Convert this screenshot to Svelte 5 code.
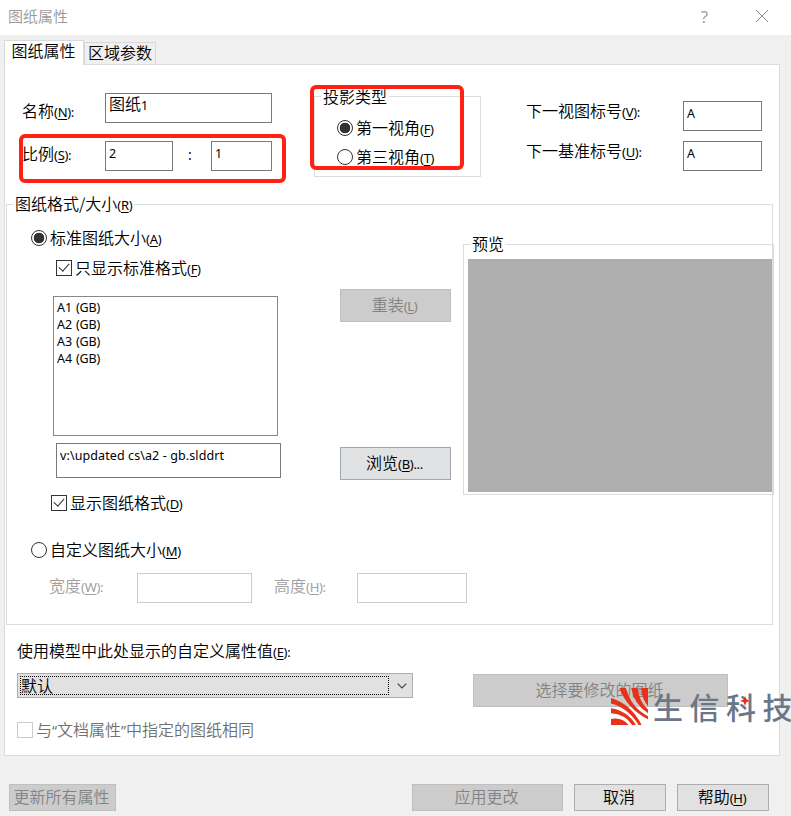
<script>
  let scaleNum = '2'
  let scaleDen = '1'
  let projection = 'first'
  let sizeMode = 'standard'
  let nextView = 'A'
  let nextDatum = 'A'
  let onlyStandard = true
  let showFormat = true
  let path = 'v:\\updated cs\\a2 - gb.slddrt'

  const sheets = ['A1 (GB)', 'A2 (GB)', 'A3 (GB)', 'A4 (GB)']
  const projections = [
    { id: 'first', text: '第一视角', key: 'F' },
    { id: 'third', text: '第三视角', key: 'T' }
  ]
</script>

{#snippet key(k, tail = '')}<span class="key">(<u>{k}</u>){tail}</span>{/snippet}

<div class="dialog">
  <header>
    <span class="title">图纸属性</span>
    <span class="help">?</span>
    <svg class="close" viewBox="0 0 14 14"><path d="M1 1 13 13M13 1 1 13" /></svg>
  </header>

  <nav>
    <button class="tab active">图纸属性</button>
    <button class="tab">区域参数</button>
  </nav>

  <main>
    <section class="top">
      <div class="basics">
        <div class="row">
          <span class="label low">名称{@render key('N', ':')}</span>
          <!-- editable div: the digits are set smaller than the Chinese -->
          <div class="name" contenteditable="true">图纸<span>1</span></div>
        </div>
        <div class="row">
          <span class="label">比例{@render key('S', ':')}</span>
          <input class="num" bind:value={scaleNum} />
          <span class="colon">:</span>
          <input class="den" bind:value={scaleDen} />
        </div>
        <div class="mark mark-scale"></div>
      </div>

      <div class="group projection">
        <div class="legend">投影类型</div>
        {#each projections as p}
          <label class="check">
            <input type="radio" value={p.id} bind:group={projection} />
            <span>{p.text}{@render key(p.key)}</span>
          </label>
        {/each}
        <div class="mark mark-projection"></div>
      </div>

      <div class="next">
        <div class="row">
          <span class="label">下一视图标号{@render key('V', ':')}</span>
          <input bind:value={nextView} />
        </div>
        <div class="row">
          <span class="label">下一基准标号{@render key('U', ':')}</span>
          <input bind:value={nextDatum} />
        </div>
      </div>
    </section>

    <section class="group format">
      <div class="legend">图纸格式/大小{@render key('R')}</div>
      <div class="columns">
        <div class="standard">
          <label class="check">
            <input type="radio" value="standard" bind:group={sizeMode} />
            <span>标准图纸大小{@render key('A')}</span>
          </label>
          <label class="check only">
            <input type="checkbox" bind:checked={onlyStandard} />
            <span>只显示标准格式{@render key('F')}</span>
          </label>
          <ul>
            {#each sheets as sheet}
              <li>{sheet}</li>
            {/each}
          </ul>
          <input class="path" bind:value={path} />
          <label class="check show">
            <input type="checkbox" bind:checked={showFormat} />
            <span>显示图纸格式{@render key('D')}</span>
          </label>
        </div>

        <div class="actions">
          <button class="btn" disabled>重装{@render key('L')}</button>
          <button class="btn browse">浏览{@render key('B', '...')}</button>
        </div>

        <div class="group preview">
          <div class="legend">预览</div>
          <div class="canvas"></div>
        </div>
      </div>

      <label class="check custom">
        <input type="radio" value="custom" bind:group={sizeMode} />
        <span>自定义图纸大小{@render key('M')}</span>
      </label>
      <div class="dims">
        <span class="width-label">宽度{@render key('W', ':')}</span>
        <input class="width" disabled />
        <span class="height-label">高度{@render key('H', ':')}</span>
        <input class="height" disabled />
      </div>
    </section>

    <section class="bottom">
      <div class="model">
        <div class="caption">使用模型中此处显示的自定义属性值{@render key('E', ':')}</div>
        <div class="select">
          <span class="value">默认</span>
          <svg viewBox="0 0 10 6"><path d="M.7.7 5 5 9.3.7" /></svg>
        </div>
        <label class="check same">
          <input type="checkbox" disabled />
          <span>与<span class="quote">“</span>文档属性<span class="quote">”</span>中指定的图纸相同</span>
        </label>
      </div>
      <button class="btn pick" disabled>选择要修改的图纸</button>
    </section>
  </main>

  <footer>
    <button class="btn update" disabled>更新所有属性</button>
    <button class="btn apply" disabled>应用更改</button>
    <button class="btn">取消</button>
    <button class="btn">帮助{@render key('H')}</button>
  </footer>

  <div class="brand">
    <svg class="logo" viewBox="0 0 110 110">
      <path d="M0 92Q32 86 53 110H0Z" />
      <path d="M0 60Q50 68 74 110H63Q42 78 0 75Z" />
      <path d="M0 30Q60 48 91 110H82Q52 60 0 46Z" />
      <path d="M25 0H44Q60 58 110 84V93Q48 62 25 0Z" />
      <path d="M60 0H79Q84 42 110 64V75Q68 48 60 0Z" />
      <path d="M90 0H110V54Q90 30 90 0Z" />
    </svg>
    <span class="brand-text">{#each '生信科技' as ch}<span>{ch}</span>{/each}</span>
    <svg class="spark" viewBox="0 0 10 10"><path d="M5 0 6.3 3.7 10 5 6.3 6.3 5 10 3.7 6.3 0 5 3.7 3.7Z" /></svg>
  </div>
</div>

<style>
  :global(body) { margin: 0; }

  .dialog {
    position: relative;
    width: 791px;
    height: 816px;
    overflow: hidden;
    display: flex;
    flex-direction: column;
    background: #f0f0f0;
    color: #000;
    font: 16px/24px "Noto Sans CJK SC", sans-serif;
    font-weight: 350;
    white-space: nowrap;
  }
  .dialog * { box-sizing: border-box; }
  button, input { font: inherit; color: inherit; margin: 0; }

  .key { font: 400 13px/20px "Noto Sans", sans-serif; letter-spacing: -0.3px; }
  u { text-underline-offset: 2px; text-decoration-thickness: 1px; }

  header { height: 35px; background: #fff; display: flex; align-items: center; color: #999; padding: 0 22px 3px 8px; }
  .title { flex: 1; font-size: 15px; }
  .help { font: 17px "Open Sans", sans-serif; margin-right: 47px; }
  .close { width: 14px; height: 14px; fill: none; stroke: #888; }

  nav { height: 29px; padding: 5px 4px 0; display: flex; align-items: flex-end; }
  .tab { height: 22px; width: 72px; border: 1px solid #d9d9d9; border-bottom: 0; background: #f0f0f0; padding: 0 0 3px; line-height: 18px; }
  .tab.active { width: 80px; height: 25px; margin-bottom: -1px; padding: 0 1px 6px 0; background: #fff; position: relative; }

  main { width: 776px; height: 692px; margin-left: 4px; border: 1px solid #dcdcdc; background: #fff; }

  .row { display: flex; height: 30px; }
  input { border: 1px solid #7a7a7a; border-radius: 0; background: #fff; padding: 0 3px 5px; height: 30px; font: 12.5px "Noto Sans", "Noto Sans CJK SC", sans-serif; outline: 0; }

  .top { display: flex; height: 139px; }
  .basics { position: relative; width: 309px; padding: 28px 0 0 17px; display: flex; flex-direction: column; gap: 18px; }
  .basics .label { width: 83px; }
  .basics .label.low { padding-top: 5px; }
  .name { width: 167px; height: 30px; padding: 0 3px; border: 1px solid #7a7a7a; line-height: 18px; }
  .name span { font: 12.5px "Noto Sans", sans-serif; }
  .num { width: 68px; }
  .colon { width: 38px; padding: 2px 4px 0 0; text-align: center; font-family: "Noto Sans", sans-serif; font-size: 14px; font-weight: 400; }
  .den { width: 61px; }

  .mark { position: absolute; border: 4px solid #ff2214; border-radius: 6px; }
  .mark-scale { left: 14px; top: 69px; width: 267px; height: 49px; }
  .mark-projection { left: -5px; top: -12px; width: 154px; height: 85px; }

  .group { position: relative; border: 1px solid #dcdcdc; }
  .legend { width: max-content; margin: -14px 0 0 6px; padding: 0 2px; background: #fff; }
  .projection { width: 167px; height: 81px; margin-top: 31px; }
  .projection .legend { margin-top: -13px; }
  .projection .check { margin: 8px 0 0 22px; }
  .projection .check + .check { margin-top: 5px; }

  .check { display: flex; align-items: center; gap: 3px; height: 24px; }
  .check > span { margin-top: -2px; }
  .check input { appearance: none; width: 16px; height: 16px; padding: 0; border: 1px solid #333; flex: none; }
  .check input[type='radio'] { border-radius: 50%; }
  .check input[type='radio']:checked { background: radial-gradient(circle, #333 5px, #fff 5.6px); }
  .check input[type='checkbox']:checked { position: relative; }
  .check input[type='checkbox']:checked::after {
    content: '';
    position: absolute;
    left: 4px;
    top: 0;
    width: 5px;
    height: 9px;
    border: solid #333;
    border-width: 0 1.3px 1.3px 0;
    transform: rotate(42deg);
  }

  .next { margin-left: 45px; padding-top: 36px; display: flex; flex-direction: column; gap: 10px; }
  .next .label { width: 157px; margin-top: -3px; }
  .next input { width: 79px; }

  .format { width: 767px; height: 421px; margin-left: 1px; }
  .columns { display: flex; height: 320px; margin-top: 3px; }
  .standard { width: 333px; flex: none; padding: 8px 0 0 24px; }
  .only { margin: 6px 0 0 25px; }
  ul { list-style: none; width: 225px; height: 140px; margin: 16px 0 7px 22px; padding: 2px 3px; border: 1px solid #828790; font: 12.5px/17px "Noto Sans", sans-serif; letter-spacing: -0.1px; word-spacing: 0.8px; }
  .path { display: block; width: 225px; height: 35px; margin-left: 25px; padding-bottom: 10px; letter-spacing: 0.1px; }
  .show { margin: 13px 0 0 20px; }
  .actions { width: 111px; flex: none; padding-top: 71px; display: flex; flex-direction: column; gap: 125px; }

  .btn { height: 27px; padding: 0 2px 3px 0; border: 1px solid #adadad; background: #e1e1e1; line-height: 22px; }
  .btn:disabled { background: #ccc; border-color: #bfbfbf; color: #838383; }
  .actions .btn { height: 33px; }
  .browse { background: #e0e2e4; border-color: #a0a7ae; }

  .preview { width: 311px; height: 251px; margin: 26px 0 0 12px; flex: none; }
  .canvas { width: 304px; height: 233px; margin: 4px 0 0 4px; background: #afafaf; }

  .custom { margin: 0 0 0 24px; }
  .dims { display: flex; height: 30px; margin-top: 11px; padding-left: 42px; color: #a0a0a0; }
  .dims input { border-color: #ccc; }
  .width-label { width: 88px; }
  .width { width: 115px; margin-right: 22px; }
  .height-label { width: 83px; }
  .height { width: 110px; }

  .bottom { display: flex; padding: 13px 0 0 12px; }
  .model { width: 456px; }
  .select { width: 396px; height: 25px; margin-top: 11px; padding: 2px; border: 1px solid #adadad; background: #e1e1e1; display: flex; align-items: center; }
  .value { width: 369px; height: 19px; border: 1px dotted #000; line-height: 16px; }
  .select svg { width: 10px; height: 6px; margin-left: 8px; fill: none; stroke: #444; stroke-width: 1.2; }
  .same { margin-top: 20px; color: #707070; }
  .check input:disabled { border-color: #ccc; }
  .quote { font: 400 14px/20px "Noto Sans", sans-serif; letter-spacing: 0; }
  .pick { width: 255px; height: 33px; margin-top: 36px; }

  footer { display: flex; gap: 11px; padding: 28px 0 0 9px; }
  footer .btn { width: 92px; }
  footer .update { width: 107px; margin-right: 285px; }
  footer .apply { width: 151px; }

  .brand { position: absolute; left: 611px; top: 688px; display: flex; }
  .logo { width: 37px; height: 37px; fill: #e8301a; }
  .brand-text { display: flex; gap: 6.5px; margin-left: 5px; font-size: 30px; line-height: 37px; font-weight: 500; color: #6b7688; }
  .spark { position: absolute; left: 129px; top: 8px; width: 10px; height: 10px; fill: #f02818; }
</style>
